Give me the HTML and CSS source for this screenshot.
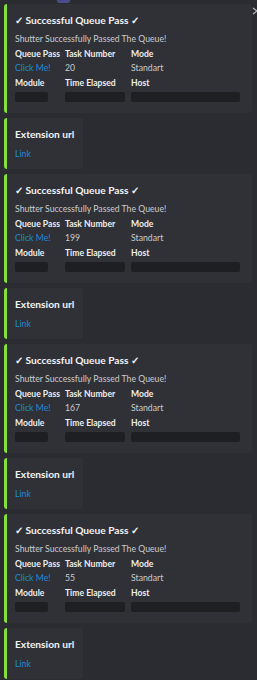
FILE: index.html
```html
<!DOCTYPE html>
<html lang="en">
<head>
  <meta charset="UTF-8" />
  <meta name="viewport" content="width=device-width, initial-scale=1" />
  <title>Queue Pass Log</title>
  <link rel="stylesheet" href="styles.css">
</head>
<body>
  <div class="feed">
    <div class="prev-line"><span class="prev-badge"></span></div>
    <svg class="close-btn" width="6" height="8" viewBox="0 0 6 8"><path d="M1 1 L5 4 L1 7" stroke="#b5b8bd" stroke-width="1.3" fill="none"/></svg>

    <div class="embed">
      <div class="embed-title">✓ Successful Queue Pass ✓</div>
      <div class="embed-desc">Shutter Successfully Passed The Queue!</div>
      <div class="fields">
        <div class="field"><div class="field-name">Queue Pass</div><a class="field-link" href="#">Click Me!</a></div>
        <div class="field"><div class="field-name">Task Number</div><div class="field-value">20</div></div>
        <div class="field"><div class="field-name">Mode</div><div class="field-value">Standart</div></div>
        <div class="field"><div class="field-name">Module</div><div class="redact redact-sm"></div></div>
        <div class="field"><div class="field-name">Time Elapsed</div><div class="redact redact-md"></div></div>
        <div class="field"><div class="field-name">Host</div><div class="redact redact-lg"></div></div>
      </div>
    </div>
    <div class="embed embed-small">
      <div class="embed-title">Extension url</div>
      <a class="embed-link" href="#">Link</a>
    </div>

    <div class="embed">
      <div class="embed-title">✓ Successful Queue Pass ✓</div>
      <div class="embed-desc">Shutter Successfully Passed The Queue!</div>
      <div class="fields">
        <div class="field"><div class="field-name">Queue Pass</div><a class="field-link" href="#">Click Me!</a></div>
        <div class="field"><div class="field-name">Task Number</div><div class="field-value">199</div></div>
        <div class="field"><div class="field-name">Mode</div><div class="field-value">Standart</div></div>
        <div class="field"><div class="field-name">Module</div><div class="redact redact-sm"></div></div>
        <div class="field"><div class="field-name">Time Elapsed</div><div class="redact redact-md"></div></div>
        <div class="field"><div class="field-name">Host</div><div class="redact redact-lg"></div></div>
      </div>
    </div>
    <div class="embed embed-small">
      <div class="embed-title">Extension url</div>
      <a class="embed-link" href="#">Link</a>
    </div>

    <div class="embed">
      <div class="embed-title">✓ Successful Queue Pass ✓</div>
      <div class="embed-desc">Shutter Successfully Passed The Queue!</div>
      <div class="fields">
        <div class="field"><div class="field-name">Queue Pass</div><a class="field-link" href="#">Click Me!</a></div>
        <div class="field"><div class="field-name">Task Number</div><div class="field-value">167</div></div>
        <div class="field"><div class="field-name">Mode</div><div class="field-value">Standart</div></div>
        <div class="field"><div class="field-name">Module</div><div class="redact redact-sm"></div></div>
        <div class="field"><div class="field-name">Time Elapsed</div><div class="redact redact-md"></div></div>
        <div class="field"><div class="field-name">Host</div><div class="redact redact-lg"></div></div>
      </div>
    </div>
    <div class="embed embed-small">
      <div class="embed-title">Extension url</div>
      <a class="embed-link" href="#">Link</a>
    </div>

    <div class="embed">
      <div class="embed-title">✓ Successful Queue Pass ✓</div>
      <div class="embed-desc">Shutter Successfully Passed The Queue!</div>
      <div class="fields">
        <div class="field"><div class="field-name">Queue Pass</div><a class="field-link" href="#">Click Me!</a></div>
        <div class="field"><div class="field-name">Task Number</div><div class="field-value">55</div></div>
        <div class="field"><div class="field-name">Mode</div><div class="field-value">Standart</div></div>
        <div class="field"><div class="field-name">Module</div><div class="redact redact-sm"></div></div>
        <div class="field"><div class="field-name">Time Elapsed</div><div class="redact redact-md"></div></div>
        <div class="field"><div class="field-name">Host</div><div class="redact redact-lg"></div></div>
      </div>
    </div>
    <div class="embed embed-small">
      <div class="embed-title">Extension url</div>
      <a class="embed-link" href="#">Link</a>
    </div>
  </div>
</body>
</html>
```

FILE: styles.css
```css
body {
  margin: 0;
  background-color: #2b2c31;
  font-family: Lato, "Noto Sans", sans-serif;
  color: #dbdee1;
  overflow: hidden;
}

.feed {
  position: relative;
  display: flex;
  flex-direction: column;
  align-items: flex-start;
  gap: 5px;
  padding-left: 4px;
}

.prev-line {
  height: 3px;
  margin-bottom: -4px;
  padding-left: 53px;
}
.prev-badge {
  display: block;
  width: 13px;
  height: 3px;
  background-color: #4b4a8a;
  border-radius: 0 0 2px 2px;
}

/* chevron cut by the right edge */
.close-btn {
  position: absolute;
  top: 7px;
  right: -1px;
}

.embed {
  box-sizing: border-box;
  width: 248px;
  height: 109px;
  padding: 8px 12px 11px 8px;
  background-color: #303136;
  border-left: 3px solid #86e03c;
  border-radius: 3px;
}
.embed-small {
  width: 79px;
  height: 51px;
}

.embed-title {
  font-size: 10.2px;
  line-height: 16px;
  font-weight: 700;
  color: #f2f3f5;
  white-space: nowrap;
}

.embed-desc {
  margin-top: 4px;
  font-size: 8.7px;
  line-height: 13px;
  color: #c9ccd1;
  white-space: nowrap;
}

.embed-link {
  display: block;
  margin-top: 5px;
  font-size: 8.7px;
  line-height: 13px;
  color: #1f8ad2;
  text-decoration: none;
}

.fields {
  display: grid;
  grid-template-columns: 50px 66px 1fr;
  row-gap: 3px;
  margin-top: 3px;
}
.field-name {
  font-size: 8.6px;
  line-height: 13px;
  font-weight: 700;
  color: #eceef0;
  white-space: nowrap;
}
.field-value {
  font-size: 8.7px;
  line-height: 13px;
  color: #c9ccd1;
}
.field-link {
  display: block;
  font-size: 8.7px;
  line-height: 13px;
  color: #1f8ad2;
  text-decoration: none;
}

.redact {
  margin-top: 2px;
  height: 10px;
  background-color: #1e1f23;
  border-radius: 2px;
}
.redact-sm { width: 33px; }
.redact-md { width: 60px; }
.redact-lg { width: 109px; }
```
